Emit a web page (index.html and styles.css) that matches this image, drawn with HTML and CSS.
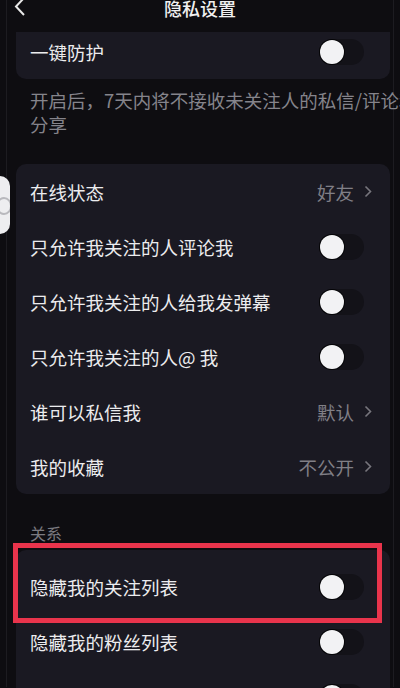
FILE: index.html
```html
<!DOCTYPE html>
<html lang="zh-CN">
<head>
    <meta charset="UTF-8">
    <meta name="viewport" content="width=device-width, initial-scale=1.0">
    <title>隐私设置</title>
    <link rel="stylesheet" href="styles.css">
</head>
<body>
    <div class="screen">
        <div class="header">
            <svg class="back" width="12" height="20" viewBox="0 0 12 20"><path d="M10 1 L2 9.5 L10 18" fill="none" stroke="#e8e8e8" stroke-width="2"/></svg>
            <div class="title">隐私设置</div>
        </div>

        <div class="card card-top">
            <div class="row">
                <span class="label">一键防护</span>
                <span class="switch"><span class="knob"></span></span>
            </div>
        </div>
        <p class="desc">开启后，7天内将不接收未关注人的私信/评论和<br>分享</p>

        <div class="card">
            <div class="row">
                <span class="label">在线状态</span>
                <span class="value">好友<svg width="8" height="13" viewBox="0 0 8 13"><path d="M1.5 1.5 L6.5 6.5 L1.5 11.5" fill="none" stroke="#77767d" stroke-width="1.6"/></svg></span>
            </div>
            <div class="row">
                <span class="label">只允许我关注的人评论我</span>
                <span class="switch"><span class="knob"></span></span>
            </div>
            <div class="row">
                <span class="label">只允许我关注的人给我发弹幕</span>
                <span class="switch"><span class="knob"></span></span>
            </div>
            <div class="row">
                <span class="label">只允许我关注的人@ 我</span>
                <span class="switch"><span class="knob"></span></span>
            </div>
            <div class="row">
                <span class="label">谁可以私信我</span>
                <span class="value">默认<svg width="8" height="13" viewBox="0 0 8 13"><path d="M1.5 1.5 L6.5 6.5 L1.5 11.5" fill="none" stroke="#77767d" stroke-width="1.6"/></svg></span>
            </div>
            <div class="row">
                <span class="label">我的收藏</span>
                <span class="value">不公开<svg width="8" height="13" viewBox="0 0 8 13"><path d="M1.5 1.5 L6.5 6.5 L1.5 11.5" fill="none" stroke="#77767d" stroke-width="1.6"/></svg></span>
            </div>
        </div>

        <div class="section">关系</div>
        <div class="card card-rel">
            <div class="highlight"></div>
            <div class="row">
                <span class="label">隐藏我的关注列表</span>
                <span class="switch"><span class="knob"></span></span>
            </div>
            <div class="row">
                <span class="label">隐藏我的粉丝列表</span>
                <span class="switch"><span class="knob"></span></span>
            </div>
            <div class="row">
                <span class="label"></span>
                <span class="switch"><span class="knob"></span></span>
            </div>
        </div>

        <div class="bubble"><span class="bubble-icon"></span></div>
    </div>
</body>
</html>
```

FILE: styles.css
```css
html, body {
    margin: 0;
    padding: 0;
    background-color: #0e0d11;
    overflow: hidden;
}
body {
    font-family: "Noto Sans CJK SC", "Noto Sans", sans-serif;
    color: #e6e6e8;
    height: 688px;
}
.screen {
    position: relative;
    width: 386px;
    height: 688px;
    margin-left: 6px;
    border-left: 1px solid #1d1c21;
    border-right: 1px solid #1d1c21;
}
.header {
    position: relative;
    height: 33px;
}
.back {
    position: absolute;
    left: 7px;
    top: -2px;
}
.title {
    text-align: center;
    font-size: 18px;
    line-height: 18px;
    margin-top: -1px;
    color: #f0f0f0;
    font-weight: 500;
}
.card {
    position: relative;
    margin: 0 3px 0 9px;
    background-color: #1a1922;
    border-radius: 10px;
}
.card-top {
    border-radius: 0 0 10px 10px;
    padding-bottom: 7px;
}
.card-top .row {
    height: 40px;
}
.row {
    display: flex;
    align-items: center;
    justify-content: space-between;
    height: 55px;
    padding: 0 18px 0 14px;
    font-size: 18.5px;
}
.label {
    color: #ececee;
}
.value {
    display: flex;
    align-items: center;
    gap: 10px;
    color: #807f86;
    font-size: 18.5px;
}
.switch {
    width: 44px;
    height: 26px;
    margin-right: 8px;
    border-radius: 13px;
    background-color: #131218;
    display: flex;
    align-items: center;
    padding-left: 1px;
}
.knob {
    width: 24px;
    height: 24px;
    border-radius: 50%;
    background-color: #f2f2f4;
    box-shadow: 0 0 0 1px #050507;
}
.desc {
    margin: 9px 0 0 23px;
    font-size: 18.5px;
    line-height: 24px;
    color: #85848b;
    white-space: nowrap;
}
.desc + .card {
    margin-top: 28px;
}
.section {
    margin: 28px 0 0 23px;
    font-size: 16px;
    line-height: 22px;
    color: #7b7a80;
}
.card-rel {
    margin-top: 6px;
    padding-top: 9px;
}
.highlight {
    position: absolute;
    left: -3px;
    top: -7px;
    width: 359px;
    height: 70px;
    border: 5px solid #e9344c;
    z-index: 2;
}
.bubble {
    position: absolute;
    left: -27px;
    top: 177px;
    width: 30px;
    height: 58px;
    border-radius: 10px;
    background-color: #eeeef0;
    overflow: hidden;
}
.bubble-icon {
    position: absolute;
    left: 16px;
    top: 21px;
    width: 12px;
    height: 14px;
    border: 2px solid #b9b9bd;
    border-radius: 50%;
}
```
